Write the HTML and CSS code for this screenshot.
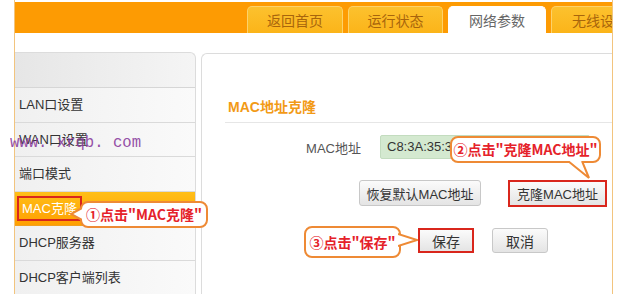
FILE: index.html
```html
<!DOCTYPE html>
<html lang="zh-CN">
<head>
  <meta charset="UTF-8" />
  <title>MAC地址克隆</title>
  <link rel="stylesheet" href="styles.css">
</head>
<body>
  <div class="frame">
    <div class="topbar">
      <nav class="tabs">
        <a class="tab t1">返回首页</a>
        <a class="tab t2">运行状态</a>
        <a class="tab t3 active">网络参数</a>
        <a class="tab t4">无线设置</a>
      </nav>
    </div>

    <div class="layout">
      <aside class="side">
        <div class="side-head"></div>
        <div class="side-item">LAN口设置</div>
        <div class="side-item">WAN口设置</div>
        <div class="side-item">端口模式</div>
        <div class="side-item active"><span class="mark">MAC克隆</span></div>
        <div class="side-item">DHCP服务器</div>
        <div class="side-item">DHCP客户端列表</div>
      </aside>

      <main class="panel">
        <h3 class="panel-title">MAC地址克隆</h3>
        <div class="form-row">
          <label class="field-label">MAC地址</label>
          <div class="mac-box">C8:3A:35:3E:6F:A1</div>
        </div>
        <div class="btn-row first">
          <button class="btn wide">恢复默认MAC地址</button>
          <button class="btn clone marked">克隆MAC地址</button>
        </div>
        <div class="btn-row second">
          <button class="btn small marked">保存</button>
          <button class="btn small">取消</button>
        </div>
      </main>
    </div>
  </div>

  <div class="watermark">www. xrqb. com</div>

  <!-- annotation callouts -->
  <div class="callout c1">①点击"MAC克隆"
    <svg class="tail" width="12" height="14" viewBox="0 0 12 14">
      <polygon points="12,1 1,7 12,13" fill="#fff"/>
      <polyline points="12,1 1,7 12,13" fill="none" stroke="#ee8a35" stroke-width="2"/>
    </svg>
  </div>
  <div class="callout c2">②点击"克隆MAC地址"
    <svg class="tail" width="24" height="18" viewBox="0 0 24 18">
      <polygon points="1,0 22,17 15,0" fill="#fff"/>
      <polyline points="1,0 22,17 15,0" fill="none" stroke="#ee8a35" stroke-width="2"/>
    </svg>
  </div>
  <div class="callout c3">③点击"保存"
    <svg class="tail" width="20" height="14" viewBox="0 0 20 14">
      <polygon points="0,1 19,7 0,13" fill="#fff"/>
      <polyline points="0,1 19,7 0,13" fill="none" stroke="#ee8a35" stroke-width="2"/>
    </svg>
  </div>
</body>
</html>
```

FILE: styles.css
```css
body {
  margin: 0;
  width: 623px;
  height: 294px;
  overflow: hidden;
  background: #fff;
  font-family: "Liberation Sans", "Noto Sans CJK SC", sans-serif;
  font-size: 13px;
  color: #333;
}
.frame {
  margin-left: 14px;
  width: 599px;
  height: 294px;
  box-sizing: border-box;
  padding-top: 2px;
  border-left: 1px solid #f2c47e;
  border-right: 1px solid #f2c47e;
}
.topbar {
  height: 31px;
  background: #fd9b03;
  overflow: hidden;
}
.tabs {
  display: flex;
  align-items: flex-end;
  gap: 5px;
  height: 31px;
  padding-left: 232px;
}
.tab {
  flex: none;
  height: 26px;
  line-height: 26px;
  text-align: center;
  font-size: 14px;
  color: #a8650c;
  background: linear-gradient(#fcc12e, #fbb419);
  border: 1px solid #fdd26a;
  border-bottom: none;
  border-radius: 5px 5px 0 0;
  font-family: "Noto Sans CJK SC", sans-serif;
}
.t1 { width: 94px; }
.t2 { width: 93px; }
.t3 { width: 96px; }
.t4 { width: 96px; }
.tab.active {
  background: #fff;
  border-color: #fff;
  color: #666;
}
.layout {
  display: flex;
  margin-top: 19px;
  height: 242px;
}
.side {
  width: 181px;
  flex: none;
  box-sizing: border-box;
  border: 1px solid #dcdcdc;
  border-left: none;
  border-bottom: none;
  border-radius: 0 6px 0 0;
  background: linear-gradient(90deg, #e6e6e6, #f5f5f5);
  margin-right: 5px;
}
.side-head {
  height: 35px;
  box-sizing: border-box;
  border-bottom: 1px solid #d6d6d6;
}
.side-item {
  height: 34.6px;
  box-sizing: border-box;
  border-bottom: 1px solid #dadada;
  padding-left: 4px;
  line-height: 34px;
  font-size: 13px;
  color: #333;
  background: linear-gradient(90deg, #f0f0f0, #fafafa);
}
.side-item.active {
  background: linear-gradient(#ffbf18, #ff9f00);
  color: #fff;
  border-bottom-color: #f0a020;
}
.mark {
  display: inline-block;
  margin-left: -2px;
  padding: 0 3px;
  height: 21px;
  line-height: 21px;
  border: 2px solid #d9261c;
}
.panel {
  flex: 1;
  box-sizing: border-box;
  border: 1px solid #dcdcdc;
  border-right: none;
  border-bottom: none;
  border-radius: 6px 0 0 0;
  margin-top: 1px;
}
.panel-title {
  margin: 43px 0 0 23px;
  padding: 0 0 5px 3px;
  line-height: 20px;
  font-size: 14px;
  font-weight: bold;
  color: #f29a16;
  border-bottom: 1px solid #e6e6e6;
}
.form-row {
  display: flex;
  align-items: center;
  margin-top: 12px;
  height: 24px;
}
.field-label {
  width: 159px;
  margin-right: 19px;
  text-align: right;
  color: #555;
}
.mac-box {
  width: 210px;
  height: 24px;
  box-sizing: border-box;
  padding-left: 6px;
  line-height: 22px;
  background: #d4e9d0;
  border: 1px solid #c3dcbf;
  border-radius: 2px;
  color: #333;
}
.btn-row {
  display: flex;
}
.btn-row.first {
  margin-top: 21px;
  padding-left: 157px;
  gap: 27px;
}
.btn-row.second {
  margin-top: 21px;
  padding-left: 216px;
  gap: 18px;
}
.btn {
  height: 26px;
  box-sizing: border-box;
  padding: 0;
  font-family: inherit;
  font-size: 13px;
  color: #333;
  background: linear-gradient(#fbfbfb, #e4e4e4);
  border: 1px solid #c8c8c8;
  border-radius: 3px;
}
.btn.wide { width: 122px; }
.btn.clone { width: 99px; height: 27px; }
.btn.small { width: 56px; height: 25px; font-size: 14px; }
.btn.marked {
  border: 2px solid #d9261c;
  border-radius: 0;
}
.watermark {
  position: absolute;
  left: 10px;
  top: 134px;
  font-family: "Liberation Mono", monospace;
  font-size: 15.6px;
  color: #8b3d9e;
  opacity: 0.9;
}
.callout {
  position: absolute;
  box-sizing: border-box;
  background: #fff;
  border: 2px solid #ee8a35;
  border-radius: 8px;
  color: #e5222a;
  font-weight: bold;
  font-size: 14px;
  line-height: 23px;
  text-align: center;
  white-space: nowrap;
  font-family: "Noto Sans CJK SC", sans-serif;
}
.tail {
  position: absolute;
}
.c1 {
  left: 80px;
  top: 201px;
  width: 128px;
  height: 27px;
}
.c1 .tail { left: -12px; top: 4px; }
.c2 {
  left: 450px;
  top: 136px;
  width: 151px;
  height: 27px;
}
.c2 .tail { left: 115px; bottom: -18px; }
.c3 {
  left: 304px;
  top: 226px;
  width: 97px;
  height: 32px;
  line-height: 28px;
}
.c3 .tail { right: -19px; top: 5px; }
```
